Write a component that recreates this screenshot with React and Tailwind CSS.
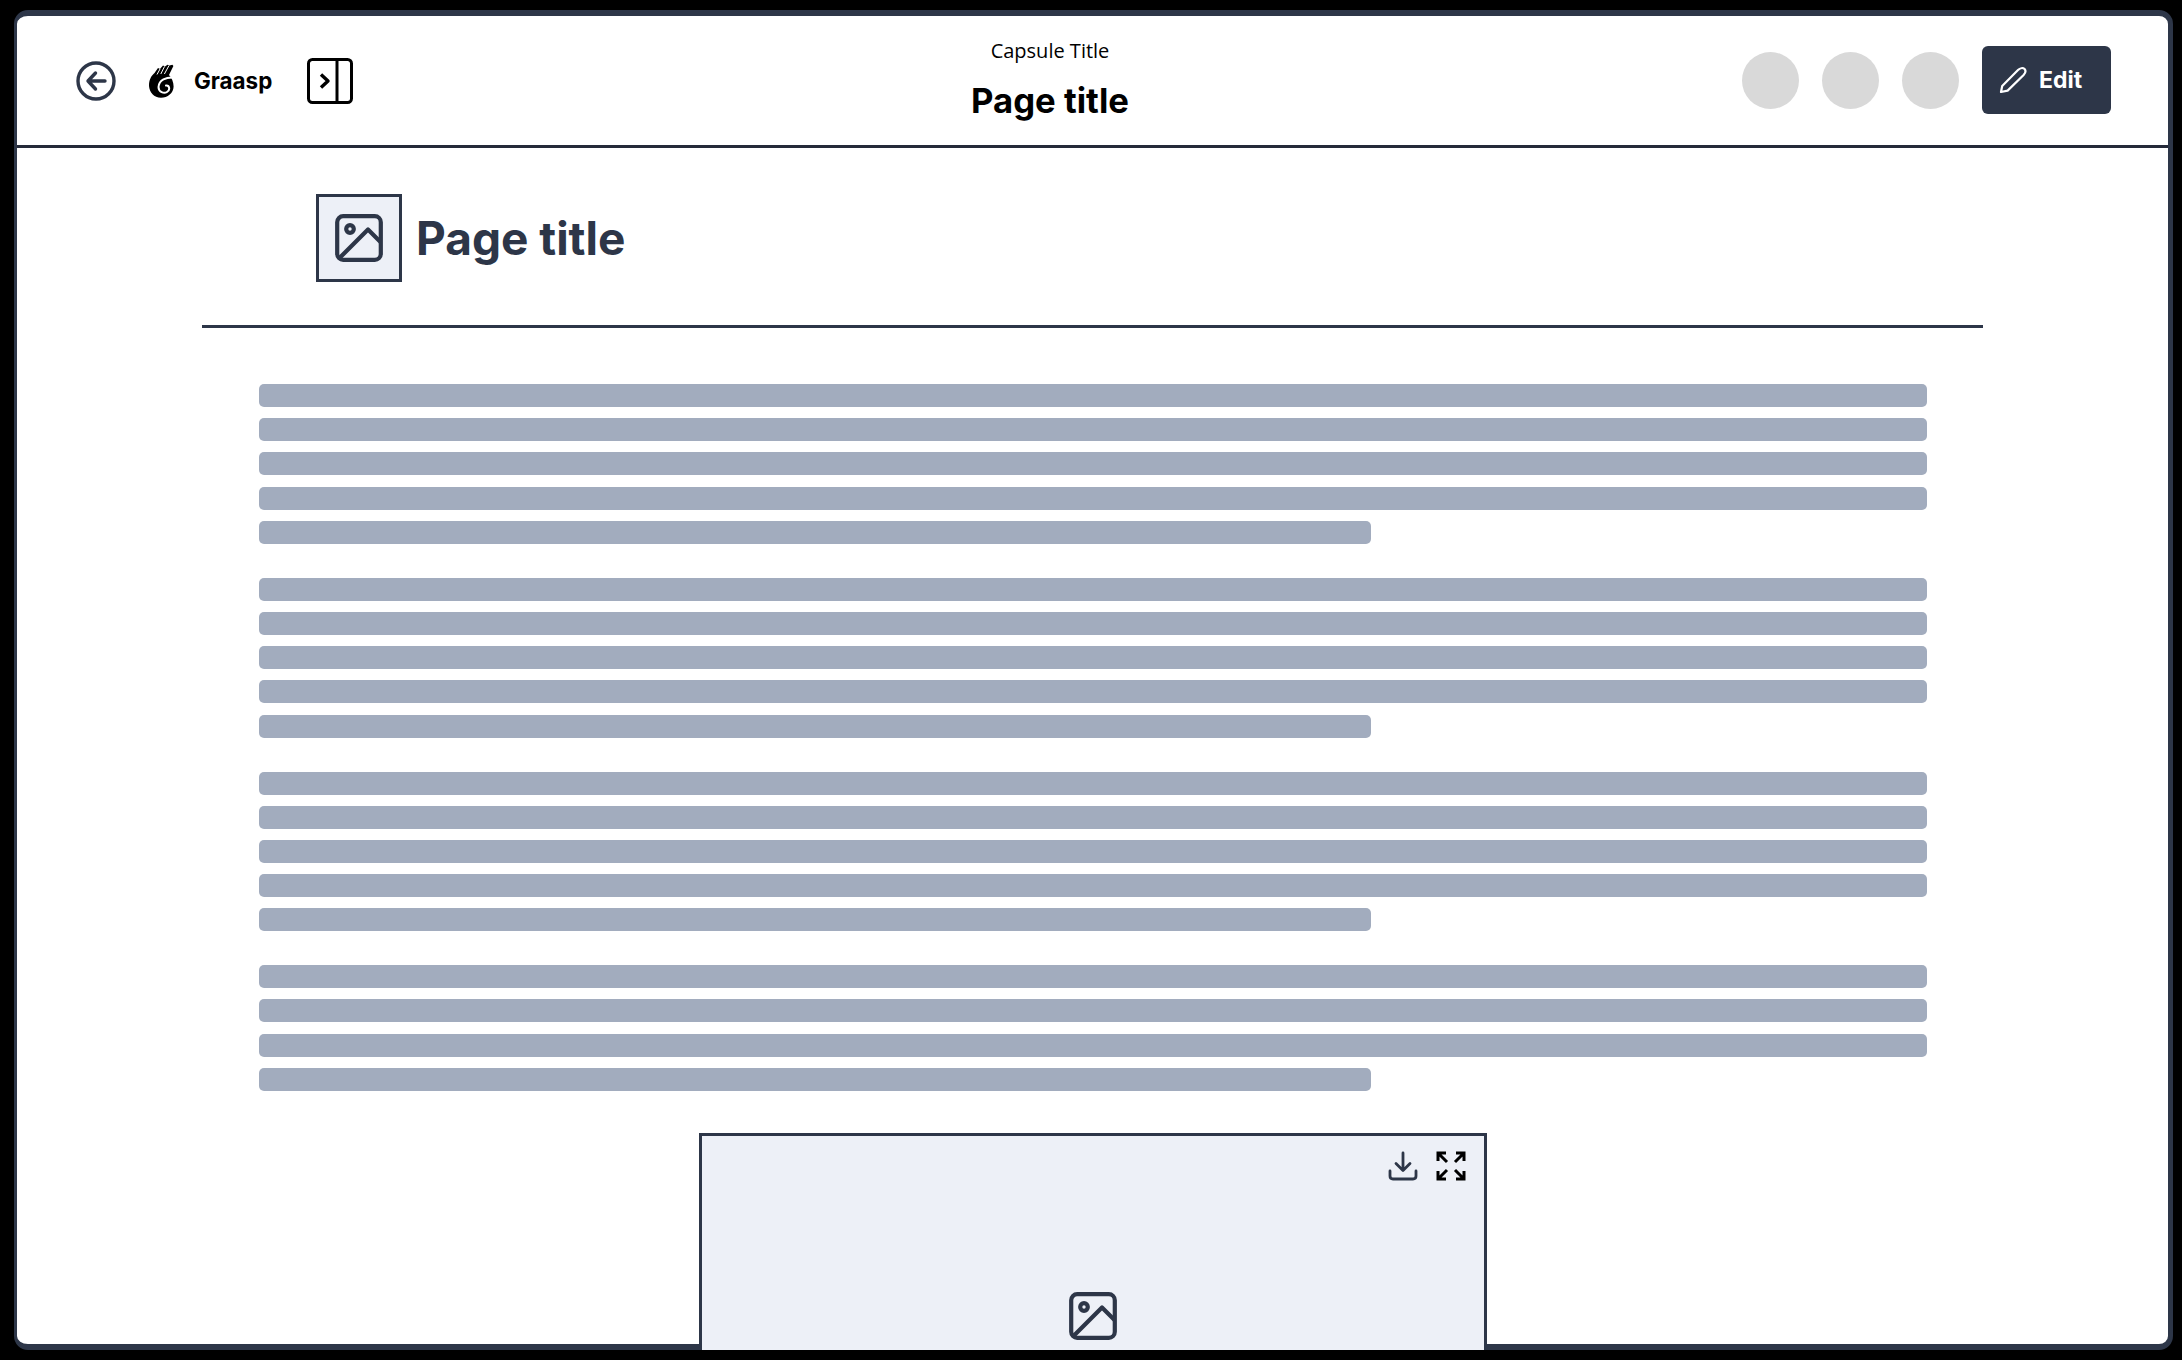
const lines = [5, 5, 5, 4];

function ImageIcon({ className }) {
  return (
    <svg viewBox="0 0 48 48" fill="none" stroke="currentColor" strokeWidth="4.2" className={className}>
      <rect x="2.2" y="2.2" width="43.6" height="43.6" rx="6" />
      <circle cx="15" cy="15" r="3.8" />
      <path d="M4 44.5L33 15.5L45.5 28" strokeLinejoin="round" />
    </svg>
  );
}

function HandLogo() {
  return (
    <svg viewBox="0 0 26 34" className="h-[34px] w-[26px]">
      <path
        fill="black"
        d="M1 22C1 16 3 12 6.5 9L10 4L12 5L15 1.5L17 2.5L19.5.8L21.5 1.6L24.4.8L25.4 2L21 11C23.6 13.5 25.6 18 25.6 22.5C25.6 29 19.5 33.8 13 33.8C6 33.8 1.5 28.5 1 22Z"
      />
      <path fill="none" stroke="white" strokeWidth="1" d="M12 5L9 10.5M16.5 2.5L12.8 10M21 1.5L16.4 10" />
      <path
        fill="none"
        stroke="white"
        strokeWidth="2"
        strokeLinecap="round"
        d="M26 13.5C18 13 11 16 10.5 23C10.5 28 16 30 19 28C22.5 26 21.5 21 18 21.5"
      />
    </svg>
  );
}

export default function App() {
  return (
    <div className="h-screen overflow-hidden bg-black pl-[14px] pt-[10px] font-['Inter',sans-serif]">
      <div className="h-[1340px] w-[2159px] rounded-[14px] border-t-[6px] border-r-[5px] border-b-[6px] border-l-[3px] border-[#2d3648] bg-white">
        {/* Top bar */}
        <header className="relative flex h-[132px] items-center justify-between border-b-[3px] border-[#252a39] pl-[59px] pr-[57px]">
          <div className="flex items-center">
            <svg viewBox="0 0 40 40" fill="none" stroke="#2d3648" strokeWidth="3.4" strokeLinecap="round" strokeLinejoin="round" className="h-10 w-10">
              <circle cx="20" cy="20" r="18" />
              <path d="M19.5 12L12 20L19.5 28M12 20H29" />
            </svg>
            <div className="ml-[32px]"><HandLogo /></div>
            <span className="ml-[20px] mt-[2px] text-[22.4px] font-bold leading-none text-black">Graasp</span>
            <svg viewBox="0 0 46 46" fill="none" stroke="black" strokeWidth="3" strokeLinejoin="round" className="ml-[35px] h-[46px] w-[46px]">
              <rect x="1.5" y="1.5" width="43" height="43" rx="4" />
              <path d="M30 1.5V44.5" />
              <path d="M14 16.5L21 23L14 29.5" strokeWidth="3.4" />
            </svg>
          </div>

          <div className="absolute left-[943px] top-0 flex w-[180px] flex-col items-center">
            <span className="mt-[23px] font-['Open_Sans',sans-serif] text-[20px] leading-6 text-black">Capsule Title</span>
            <span className="mt-[17px] text-[34.7px] font-bold leading-10 text-black">Page title</span>
          </div>

          <div className="flex items-center">
            <div className="h-[57px] w-[57px] rounded-full bg-[#d9d9d9]" />
            <div className="ml-[23px] h-[57px] w-[57px] rounded-full bg-[#d9d9d9]" />
            <div className="ml-[23px] h-[57px] w-[57px] rounded-full bg-[#d9d9d9]" />
            <button className="mb-[1px] ml-[23px] flex h-[68px] w-[129px] items-center gap-[12px] rounded-[6px] bg-[#2d3648] pl-[17px] text-[23px] font-bold text-white">
              <svg viewBox="0 0 28 28" fill="none" stroke="white" strokeWidth="2.2" strokeLinejoin="round" className="h-7 w-7">
                <path d="M2 26L3.2 20L19 4C21 2 24 1.6 25.6 3C27 4.6 26.4 7 24.6 9L8.6 24.6Z" />
              </svg>
              Edit
            </button>
          </div>
        </header>

        {/* Page heading */}
        <div className="mx-[185px] border-b-[3px] border-[#2d3648] pb-[43px] pl-[114px] pt-[46px]">
          <div className="flex items-center gap-[14px]">
            <div className="flex h-[88px] w-[86px] items-center justify-center border-[3px] border-[#2d3648] bg-[#edf0f7]">
              <ImageIcon className="h-12 w-12 text-[#2d3648]" />
            </div>
            <h1 className="text-[46px] font-bold leading-none text-[#2d3648]">Page title</h1>
          </div>
        </div>

        {/* Text placeholder */}
        <div className="ml-[242px] mr-[241px] mt-[56px] flex flex-col gap-[34px]">
          {lines.map((count, i) => (
            <div key={i} className="flex flex-col gap-[11.2px]">
              {Array.from({ length: count }).map((_, j) => (
                <div key={j} className={`h-[23px] rounded-[5px] bg-[#a2acbe] ${j === count - 1 ? 'w-[1112px]' : 'w-full'}`} />
              ))}
            </div>
          ))}
        </div>

        {/* Image block */}
        <div className="ml-[682px] mt-[42px] flex h-[217px] w-[788px] flex-col border-[3px] border-b-0 border-[#2d3648] bg-[#edf0f7]">
          <div className="flex items-center justify-end gap-[18px] pr-[18px] pt-[15px]">
            <svg viewBox="0 0 30 30" fill="none" stroke="#2d3648" strokeWidth="2.8" strokeLinecap="round" strokeLinejoin="round" className="h-[30px] w-[30px]">
              <path d="M15 2V19M8 12.5L15 19.5L22 12.5" />
              <path d="M2 20V25C2 27 3 28 5 28H25C27 28 28 27 28 25V20" />
            </svg>
            <svg viewBox="0 0 30 30" fill="none" stroke="black" strokeWidth="3" className="h-[30px] w-[30px]">
              <path d="M2 10V2H10M2 2L11 11M20 2H28V10M28 2L19 11M2 20V28H10M2 28L11 19M20 28H28V20M28 28L19 19" />
            </svg>
          </div>
          <div className="flex justify-center pt-[111px]">
            <ImageIcon className="h-12 w-12 text-[#2d3648]" />
          </div>
        </div>
      </div>
    </div>
  );
}
